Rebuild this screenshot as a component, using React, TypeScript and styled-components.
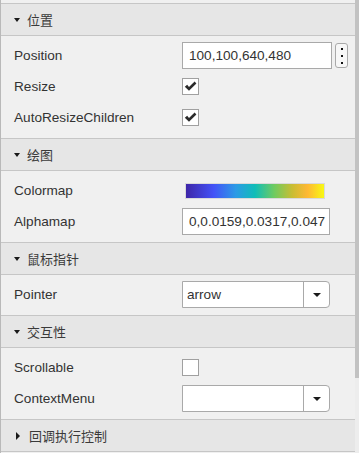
import React from 'react'
import styled, { createGlobalStyle } from 'styled-components'

const Global = createGlobalStyle`
  html, body { margin: 0; padding: 0; background: #f0f0f0; }
  body { font-family: "Liberation Sans", Arial, "Noto Sans CJK SC", sans-serif; color: #333; }
`

const Frame = styled.div`
  width: 359px; height: 453px; overflow: hidden;
  display: flex; background: #f0f0f0;
`

const Panel = styled.div`
  flex: 1;
  border-left: 1px solid #b9b9b9;
  padding-top: 3px;
  display: flex; flex-direction: column;
`

const Scrollbar = styled.div`
  width: 4px; background: #ededed;
  display: flex; flex-direction: column;
`
const Thumb = styled.div`height: 378px; background: #c2c2c2;`

const Header = styled.div`
  height: 31px;
  border-top: 1px solid #c6c6c6;
  border-bottom: 1px solid #c6c6c6;
  background: #e6e6e6;
  display: flex; align-items: center;
  padding-left: 13px;
  font-family: "Noto Sans CJK SC", sans-serif;
  font-size: 13px; color: #3a3a3a;
`

const Caret = styled.span<{ $open?: boolean }>`
  width: 0; height: 0;
  ${({ $open }) => $open
    ? `border-left: 3.5px solid transparent; border-right: 3.5px solid transparent; border-top: 4px solid #1a1a1a; margin: 1px 7px 0 0;`
    : `border-top: 4px solid transparent; border-bottom: 4px solid transparent; border-left: 4px solid #1a1a1a; margin: 0 9px 0 2px;`}
`

const Body = styled.div`
  padding: 4px 0 5px 13px;
  display: grid;
  grid-template-columns: 168px 1fr;
  grid-auto-rows: 31px;
  align-items: center;
`

const Label = styled.div`font-size: 13.6px; color: #333;`

const Control = styled.div`display: flex; align-items: center; gap: 3px;`

const TextBox = styled.div<{ $w: number }>`
  width: ${({ $w }) => $w}px; height: 27px; box-sizing: border-box;
  border: 1px solid #a9a9a9; background: #fff;
  display: flex; align-items: center;
  padding-left: 6px;
  font-size: 13.6px; color: #333;
  white-space: nowrap; overflow: hidden;
`

const DotsButton = styled.div`
  width: 13px; height: 25px; box-sizing: border-box;
  border: 1px solid #a9a9a9; border-radius: 3px; background: #f7f7f7;
  display: flex; flex-direction: column; align-items: center; justify-content: center; gap: 5px;
  & > i { width: 2px; height: 2px; background: #111; display: block; }
`

const CheckBox = styled.div`
  width: 17px; height: 17px; box-sizing: border-box;
  border: 1px solid #a0a0a0; background: #fff;
  display: flex; align-items: center; justify-content: center;
`

const ColorBar = styled.div`
  margin-left: 3px;
  width: 140px; height: 16px; box-sizing: border-box;
  border: 1px solid #d9d9d9;
  background: linear-gradient(90deg, #3e26a8 0%, #4352f7 20%, #2c9ae6 36%, #10bdb8 50%, #6fcb60 64%, #c9bd33 77%, #feb834 88%, #f8f914 100%);
`

const Select = styled.div`
  width: 148px; height: 27px; box-sizing: border-box;
  border: 1px solid #a9a9a9; border-radius: 0 4px 4px 0; background: #fff;
  display: flex; align-items: stretch;
  font-size: 13.6px; color: #333;
`
const SelectValue = styled.div`flex: 1; display: flex; align-items: center; padding-left: 4px;`
const SelectArrow = styled.div`
  width: 25px; border-left: 1px solid #a9a9a9;
  display: flex; align-items: center; justify-content: center;
  &::after {
    content: ''; width: 0; height: 0;
    border-left: 4px solid transparent; border-right: 4px solid transparent; border-top: 4px solid #1a1a1a;
    margin-top: 1px;
  }
`

const Check = () => (
  <svg width="13" height="11" viewBox="0 0 13 11">
    <path d="M0.8 5.8 L3.2 3.8 L5 6 L10.6 0.6 L12.4 2.4 L5 9.8 Z" fill="#2b2b2b" />
  </svg>
)

export default function App() {
  return (
    <Frame>
      <Global />
      <Panel>
        <Header><Caret $open />位置</Header>
        <Body>
          <Label>Position</Label>
          <Control>
            <TextBox $w={150}>100,100,640,480</TextBox>
            <DotsButton><i /><i /><i /></DotsButton>
          </Control>
          <Label>Resize</Label>
          <Control><CheckBox><Check /></CheckBox></Control>
          <Label>AutoResizeChildren</Label>
          <Control><CheckBox><Check /></CheckBox></Control>
        </Body>

        <Header><Caret $open />绘图</Header>
        <Body>
          <Label>Colormap</Label>
          <Control><ColorBar /></Control>
          <Label>Alphamap</Label>
          <Control><TextBox $w={148}>0,0.0159,0.0317,0.047</TextBox></Control>
        </Body>

        <Header><Caret $open />鼠标指针</Header>
        <Body>
          <Label>Pointer</Label>
          <Control>
            <Select><SelectValue>arrow</SelectValue><SelectArrow /></Select>
          </Control>
        </Body>

        <Header><Caret $open />交互性</Header>
        <Body>
          <Label>Scrollable</Label>
          <Control><CheckBox /></Control>
          <Label>ContextMenu</Label>
          <Control>
            <Select><SelectValue /><SelectArrow /></Select>
          </Control>
        </Body>

        <Header><Caret />回调执行控制</Header>
      </Panel>
      <Scrollbar><Thumb /></Scrollbar>
    </Frame>
  )
}
